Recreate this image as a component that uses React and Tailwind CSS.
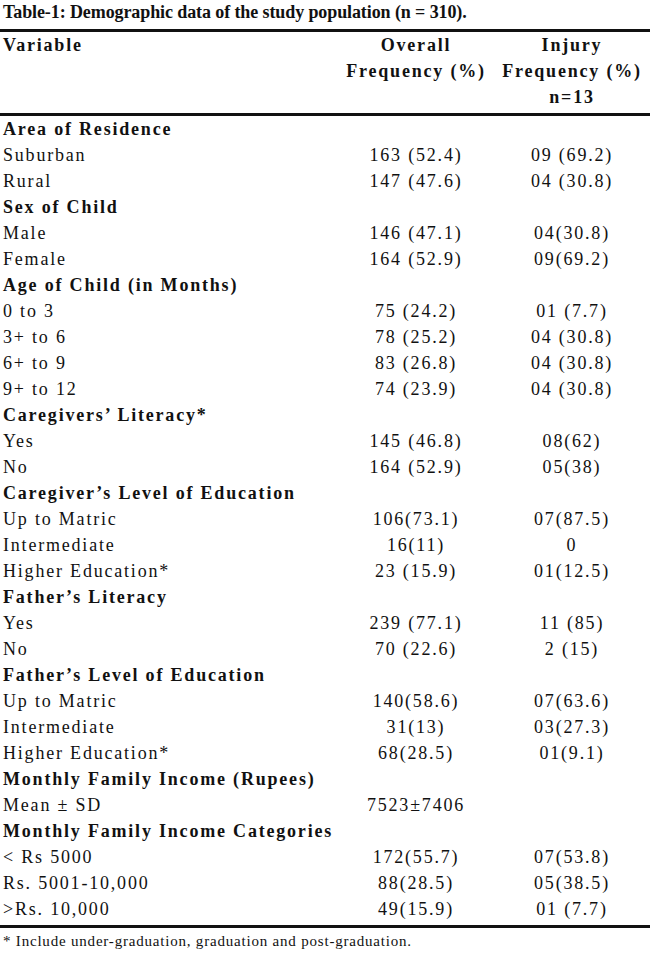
const sections = [
  {
    title: 'Area of Residence',
    rows: [
      ['Suburban', '163 (52.4)', '09 (69.2)'],
      ['Rural', '147 (47.6)', '04 (30.8)'],
    ],
  },
  {
    title: 'Sex of Child',
    rows: [
      ['Male', '146 (47.1)', '04(30.8)'],
      ['Female', '164 (52.9)', '09(69.2)'],
    ],
  },
  {
    title: 'Age of Child (in Months)',
    rows: [
      ['0 to 3', '75 (24.2)', '01 (7.7)'],
      ['3+ to 6', '78 (25.2)', '04 (30.8)'],
      ['6+ to 9', '83 (26.8)', '04 (30.8)'],
      ['9+ to 12', '74 (23.9)', '04 (30.8)'],
    ],
  },
  {
    title: 'Caregivers\u2019 Literacy*',
    rows: [
      ['Yes', '145 (46.8)', '08(62)'],
      ['No', '164 (52.9)', '05(38)'],
    ],
  },
  {
    title: 'Caregiver\u2019s Level of Education',
    rows: [
      ['Up to Matric', '106(73.1)', '07(87.5)'],
      ['Intermediate', '16(11)', '0'],
      ['Higher Education*', '23 (15.9)', '01(12.5)'],
    ],
  },
  {
    title: 'Father\u2019s Literacy',
    rows: [
      ['Yes', '239 (77.1)', '11 (85)'],
      ['No', '70 (22.6)', '2 (15)'],
    ],
  },
  {
    title: 'Father\u2019s Level of Education',
    rows: [
      ['Up to Matric', '140(58.6)', '07(63.6)'],
      ['Intermediate', '31(13)', '03(27.3)'],
      ['Higher Education*', '68(28.5)', '01(9.1)'],
    ],
  },
  {
    title: 'Monthly Family Income (Rupees)',
    rows: [['Mean \u00b1 SD', '7523\u00b17406', '']],
  },
  {
    title: 'Monthly Family Income Categories',
    rows: [
      ['< Rs 5000', '172(55.7)', '07(53.8)'],
      ['Rs. 5001-10,000', '88(28.5)', '05(38.5)'],
      ['>Rs. 10,000', '49(15.9)', '01 (7.7)'],
    ],
  },
]

const cols = 'grid grid-cols-[1fr_156px_156px]'

export default function App() {
  return (
    <div className="w-[650px] min-h-[958px] bg-white text-[#111] font-['Liberation_Serif',serif] text-[18px] tracking-[1.8px]">
      <h1 className="h-[29px] pl-[3px] pt-[1px] text-[18px] font-bold leading-[22px] tracking-[-0.1px]">
        Table-1: Demographic data of the study population (n = 310).
      </h1>
      <div className="h-[3px] bg-[#111]" />

      <div className={`${cols} pb-[3px] font-bold leading-[26px]`}>
        <div className="pl-[3px]">Variable</div>
        <div className="text-center">Overall<br />Frequency (%)</div>
        <div className="text-center">Injury<br />Frequency (%)<br />n=13</div>
      </div>
      <div className="h-[3px] bg-[#111]" />

      <div className="leading-[26px]">
        {sections.map((s) => (
          <div key={s.title}>
            <div className="pl-[3px] font-bold">{s.title}</div>
            {s.rows.map((r, i) => (
              <div key={i} className={cols}>
                <div className="pl-[3px]">{r[0]}</div>
                <div className="text-center">{r[1]}</div>
                <div className="text-center">{r[2]}</div>
              </div>
            ))}
          </div>
        ))}
      </div>

      <div className="mt-[3px] h-[3px] bg-[#111]" />
      <p className="pl-[3px] pt-[2px] text-[15px] leading-[22px] tracking-[0.8px]">
        * Include under-graduation, graduation and post-graduation.
      </p>
    </div>
  )
}
